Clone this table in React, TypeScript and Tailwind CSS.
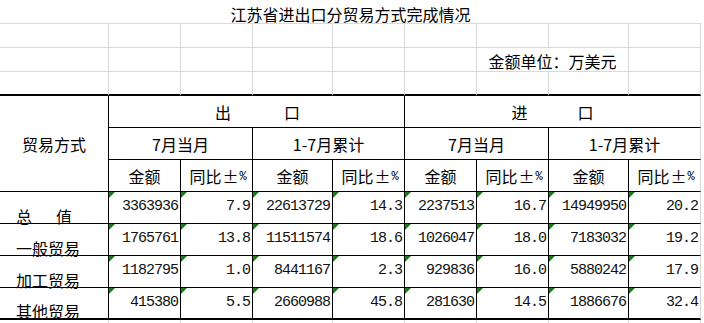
const rows = [
  { label: 'total', values: ['3363936', '7.9', '22613729', '14.3', '2237513', '16.7', '14949950', '20.2'] },
  { label: '一般贸易', values: ['1765761', '13.8', '11511574', '18.6', '1026047', '18.0', '7183032', '19.2'] },
  { label: '加工贸易', values: ['1182795', '1.0', '8441167', '2.3', '929836', '16.0', '5880242', '17.9'] },
  { label: '其他贸易', values: ['415380', '5.5', '2660988', '45.8', '281630', '14.5', '1886676', '32.4'] },
];

const sub = ['金额', '同比', '金额', '同比', '金额', '同比', '金额', '同比'];

export default function App() {
  return (
    <div className="w-[704px] h-[323px] bg-white overflow-hidden text-black font-['Noto_Sans_CJK_SC',sans-serif] text-[16px]">
      <div className="grid grid-cols-[109px_72px_72px_80px_72px_72px_72px_80px_72px]">
        {/* title row */}
        <div className="col-span-9 h-[24px] border-b border-[#d9d9d9] flex items-end justify-center leading-[16px] pb-[1px]">
          江苏省进出口分贸易方式完成情况
        </div>

        {/* blank rows */}
        {Array.from({ length: 9 }).map((_, i) => (
          <div key={'a' + i} className="h-[24px] border-r border-b border-[#d9d9d9]" />
        ))}
        {Array.from({ length: 6 }).map((_, i) => (
          <div key={'b' + i} className="h-[24px] border-r border-b border-[#d9d9d9]" />
        ))}
        <div className="col-span-2 h-[24px] border-r border-b border-[#d9d9d9] flex items-end justify-center leading-[16px] pb-[2px]">
          金额单位：万美元
        </div>
        <div className="h-[24px] border-r border-b border-[#d9d9d9]" />
        {Array.from({ length: 9 }).map((_, i) => (
          <div key={'c' + i} className="h-[24px] border-r border-[#d9d9d9] border-b-2 border-b-black" />
        ))}

        {/* header */}
        <div className="row-span-3 border-r border-b border-black flex items-center justify-center">
          贸易方式
        </div>
        <div className="col-span-4 h-[32px] border-r border-b border-black flex items-center justify-center gap-[53px] pl-[2px]">
          <span>出</span>
          <span>口</span>
        </div>
        <div className="col-span-4 h-[32px] border-r border-r-[#d9d9d9] border-b border-b-black flex items-center justify-center gap-[50px]">
          <span>进</span>
          <span>口</span>
        </div>

        <div className="col-span-2 h-[32px] border-r border-b border-black flex items-center justify-center">7月当月</div>
        <div className="col-span-2 h-[32px] border-r border-b border-black flex items-center justify-center">1-7月累计</div>
        <div className="col-span-2 h-[32px] border-r border-b border-black flex items-center justify-center">7月当月</div>
        <div className="col-span-2 h-[32px] border-r border-r-[#d9d9d9] border-b border-b-black flex items-center justify-center">1-7月累计</div>

        {sub.map((s, i) => (
          <div
            key={'s' + i}
            className={`h-[32px] border-r border-b border-b-black flex items-center justify-center ${i % 2 === 1 ? 'pl-[2px]' : ''} ${i === 7 ? 'border-r-[#d9d9d9]' : 'border-r-black'}`}
          >
            {s}
            {i % 2 === 1 && (
              <>
                <span className="ml-[1px]">±</span>
                <span className="font-['Liberation_Mono',monospace] text-[12px] tracking-[-1px] ml-[1px] translate-y-[1px]">%</span>
              </>
            )}
          </div>
        ))}

        {/* data */}
        {rows.map((r, ri) => {
          const last = ri === rows.length - 1;
          return [
            <div
              key={'l' + ri}
              className={`h-[32px] border-r border-black flex items-end pl-[16px] leading-[16px] ${last ? 'border-b-2' : 'border-b'}`}
            >
              <span className="translate-y-[1px]">
                {r.label === 'total' ? (
                  <>
                    <span className="mr-[24px]">总</span>值
                  </>
                ) : (
                  r.label
                )}
              </span>
            </div>,
            ...r.values.map((v, vi) => (
              <div
                key={'v' + ri + '-' + vi}
                className={`relative h-[32px] border-r border-b-black flex items-center justify-end pr-[2px] font-['Liberation_Mono',monospace] text-[15px] tracking-[-1px] text-[#111] ${last ? 'border-b-2' : 'border-b'} ${vi === 7 ? 'border-r-[#d9d9d9]' : 'border-r-black'}`}
              >
                <span className="absolute left-0 top-0 w-0 h-0 border-t-[6px] border-r-[6px] border-t-[#1f7a1f] border-r-transparent" />
                {v}
              </div>
            )),
          ];
        })}

        {/* below */}
        {Array.from({ length: 9 }).map((_, i) => (
          <div key={'d' + i} className="h-[6px] border-r border-[#d9d9d9]" />
        ))}
      </div>
    </div>
  );
}
